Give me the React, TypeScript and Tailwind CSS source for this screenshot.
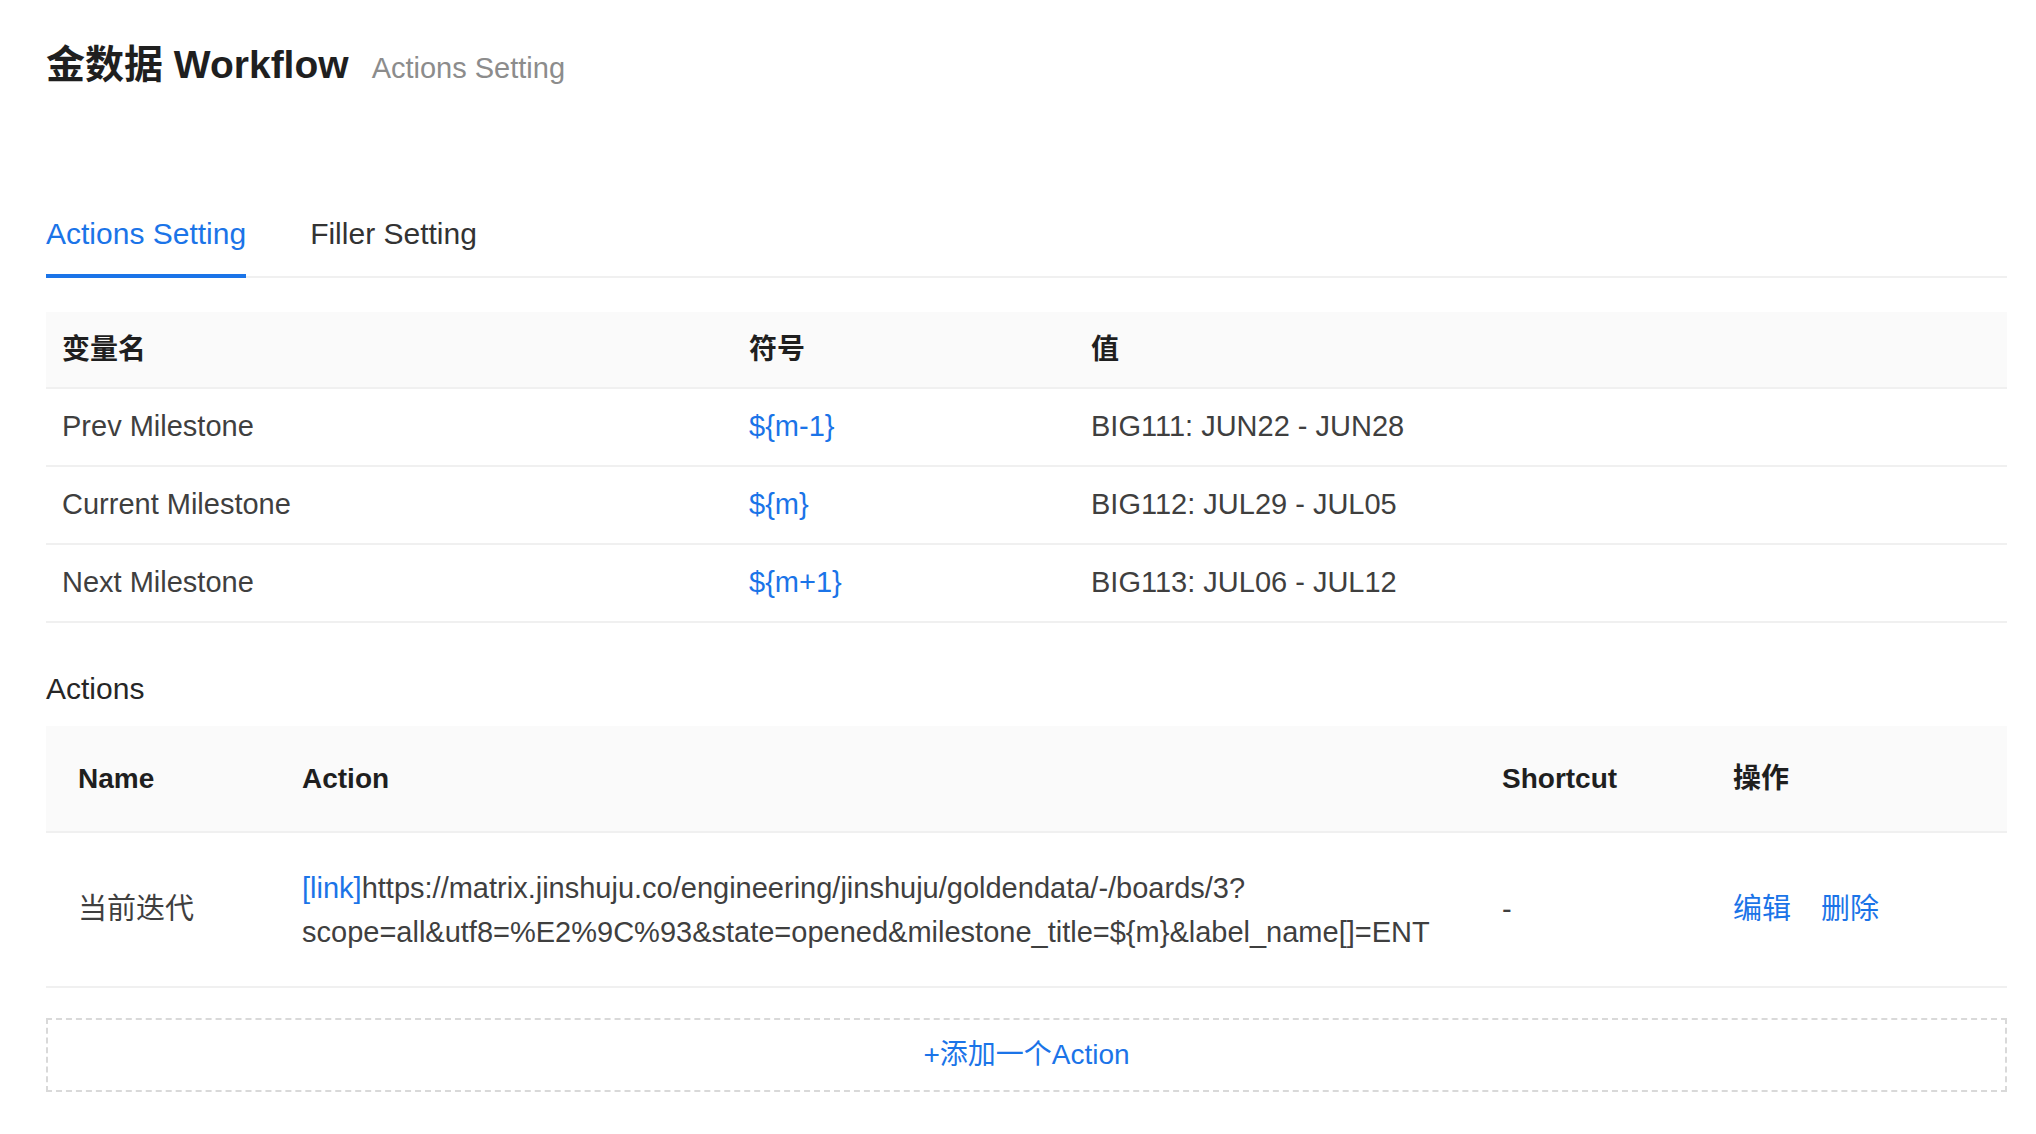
const font = { fontFamily: '"Liberation Sans", "Noto Sans CJK SC", sans-serif' };

const variables = [
  { name: "Prev Milestone", symbol: "${m-1}", value: "BIG111: JUN22 - JUN28" },
  { name: "Current Milestone", symbol: "${m}", value: "BIG112: JUL29 - JUL05" },
  { name: "Next Milestone", symbol: "${m+1}", value: "BIG113: JUL06 - JUL12" },
];

function Tabs() {
  return (
    <div className="mt-[121px] flex gap-[64px] border-b-2 border-[#f0f0f0]">
      <div className="-mb-[2px] border-b-4 border-[#1b74e8] pb-[20px] text-[30px] leading-[40px] text-[#1b74e8]">
        Actions Setting
      </div>
      <div className="-mb-[2px] border-b-4 border-transparent pb-[20px] text-[30px] leading-[40px] text-[#333333]">
        Filler Setting
      </div>
    </div>
  );
}

function VariableTable() {
  const cols = "grid grid-cols-[687px_342px_1fr]";
  return (
    <div className="mt-[34px]">
      <div className={`${cols} h-[77px] items-center border-b-2 border-[#f0f0f0] bg-[#fafafa] text-[28px] font-bold text-[#1f1f1f]`}>
        <div className="pl-[16px]">变量名</div>
        <div className="pl-[16px]">符号</div>
        <div className="pl-[16px]">值</div>
      </div>
      {variables.map((v) => (
        <div
          key={v.name}
          className={`${cols} h-[78px] items-center border-b-2 border-[#f0f0f0] text-[29px] text-[#3f3f3f]`}
        >
          <div className="pl-[16px]">{v.name}</div>
          <div className="pl-[16px] text-[#1b74e8]">{v.symbol}</div>
          <div className="pl-[16px]">{v.value}</div>
        </div>
      ))}
    </div>
  );
}

function ActionsTable() {
  const cols = "grid grid-cols-[224px_1200px_231px_1fr]";
  return (
    <div className="mt-[17px]">
      <div className={`${cols} h-[107px] items-center border-b-2 border-[#f0f0f0] bg-[#fafafa] text-[28px] font-bold text-[#1f1f1f]`}>
        <div className="pl-[32px]">Name</div>
        <div className="pl-[32px]">Action</div>
        <div className="pl-[32px]">Shortcut</div>
        <div className="pl-[32px]">操作</div>
      </div>
      <div className={`${cols} h-[155px] items-center border-b-2 border-[#f0f0f0] text-[29px] text-[#3f3f3f]`}>
        <div className="pl-[32px]">当前迭代</div>
        <div className="pl-[32px] leading-[44px]">
          <div className="whitespace-nowrap">
            <span className="text-[#1b74e8]">[link]</span>
            https://matrix.jinshuju.co/engineering/jinshuju/goldendata/-/boards/3?
          </div>
          <div className="whitespace-nowrap">
            scope=all&amp;utf8=%E2%9C%93&amp;state=opened&amp;milestone_title=${"{m}"}&amp;label_name[]=ENT
          </div>
        </div>
        <div className="pl-[32px]">-</div>
        <div className="flex gap-[30px] pl-[32px] text-[#1b74e8]">
          <span>编辑</span>
          <span>删除</span>
        </div>
      </div>
    </div>
  );
}

export default function App() {
  return (
    <div className="min-h-screen bg-white pl-[46px] pr-[29px] pb-[40px]" style={font}>
      <div className="flex items-baseline pt-[40px] leading-[50px]">
        <span className="text-[39px] font-bold text-[#1f1f1f]">金数据 Workflow</span>
        <span className="ml-[23px] text-[29px] text-[#8c8c8c]">Actions Setting</span>
      </div>
      <Tabs />
      <VariableTable />
      <div className="mt-[46px] text-[30px] leading-[40px] text-[#262626]">Actions</div>
      <ActionsTable />
      <button className="mt-[30px] flex h-[74px] w-full items-center justify-center border-2 border-dashed border-[#d9d9d9] text-[28px] text-[#1b74e8]">
        +添加一个Action
      </button>
    </div>
  );
}
